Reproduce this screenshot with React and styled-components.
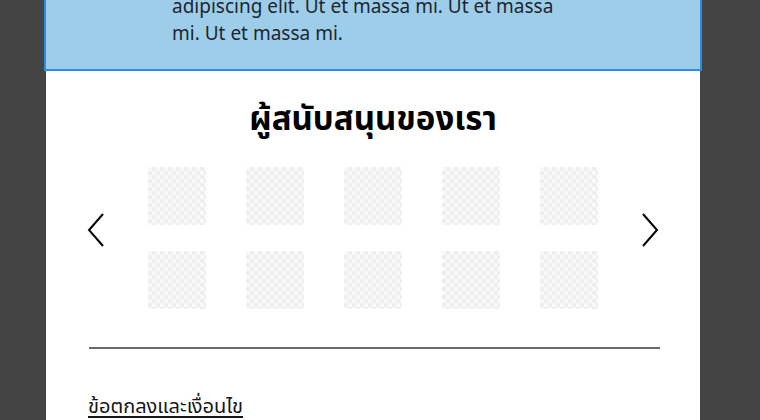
import React from "react";
import styled, { createGlobalStyle } from "styled-components";

const GlobalStyle = createGlobalStyle`
  html, body {
    margin: 0;
    padding: 0;
    background: #444444;
    overflow: hidden;
  }
  body {
    font-family: "Noto Sans", "Noto Sans Thai", "Open Sans", sans-serif;
    color: #161616;
  }
`;

const Page = styled.div`
  width: 654px;
  margin-left: 46px;
  height: 420px;
  background: #ffffff;
  display: flex;
  flex-direction: column;
`;

const Notice = styled.div`
  margin: -40px -2px 0;
  border: 2px solid #2d8de4;
  background: #9ecdea;
  padding: 4px 40px 22px 126px;
`;

const NoticeText = styled.p`
  margin: 0;
  font-size: 19px;
  line-height: 27px;
  color: #1c2630;
  white-space: nowrap;
`;

const Heading = styled.h2`
  margin: 24px 0 0;
  text-align: center;
  font-size: 33px;
  font-weight: 700;
  line-height: 46px;
  color: #000;
`;

const Carousel = styled.div`
  display: flex;
  align-items: center;
  justify-content: space-between;
  padding: 0 41px;
  margin-top: 26px;
`;

const Arrow = styled.button`
  border: none;
  background: none;
  padding: 0;
  margin-bottom: 16px;
  width: 18px;
  height: 34px;
  display: flex;
  align-items: center;
  justify-content: center;
  cursor: pointer;
`;

const LogoGrid = styled.div`
  display: grid;
  grid-template-columns: repeat(5, 58px);
  column-gap: 40px;
  row-gap: 26px;
`;

const Logo = styled.div`
  width: 58px;
  height: 58px;
  background-color: #f7f7f7;
  background-image:
    linear-gradient(45deg, #ececec 25%, transparent 25%, transparent 75%, #ececec 75%),
    linear-gradient(45deg, #ececec 25%, transparent 25%, transparent 75%, #ececec 75%);
  background-size: 8px 8px;
  background-position: 0 0, 4px 4px;
  opacity: 0.85;
`;

const Divider = styled.hr`
  margin: 38px 40px 0 43px;
  border: none;
  border-top: 2px solid #6b6b6b;
  height: 0;
`;

const FooterLink = styled.a`
  margin: 44px 0 0 42px;
  font-size: 20px;
  line-height: 26px;
  color: #161616;
  text-decoration: underline;
  text-underline-offset: 3px;
  align-self: flex-start;
`;

const Chevron = ({ dir }) => (
  <svg width="18" height="34" viewBox="0 0 18 34" fill="none">
    <path
      d={dir === "left" ? "M16 1 L2 17 L16 33" : "M2 1 L16 17 L2 33"}
      stroke="#000"
      strokeWidth="2"
    />
  </svg>
);

export default function App() {
  const logos = Array.from({ length: 10 }, (_, i) => i);
  return (
    <>
      <GlobalStyle />
      <Page>
        <Notice>
          <NoticeText>
            Lorem ipsum dolor sit amet, consectetur
            <br />
            adipiscing elit. Ut et massa mi. Ut et massa
            <br />
            mi. Ut et massa mi.
          </NoticeText>
        </Notice>
        <Heading>ผู้สนับสนุนของเรา</Heading>
        <Carousel>
          <Arrow aria-label="previous">
            <Chevron dir="left" />
          </Arrow>
          <LogoGrid>
            {logos.map((i) => (
              <Logo key={i} />
            ))}
          </LogoGrid>
          <Arrow aria-label="next">
            <Chevron dir="right" />
          </Arrow>
        </Carousel>
        <Divider />
        <FooterLink href="#">ข้อตกลงและเงื่อนไข</FooterLink>
      </Page>
    </>
  );
}
